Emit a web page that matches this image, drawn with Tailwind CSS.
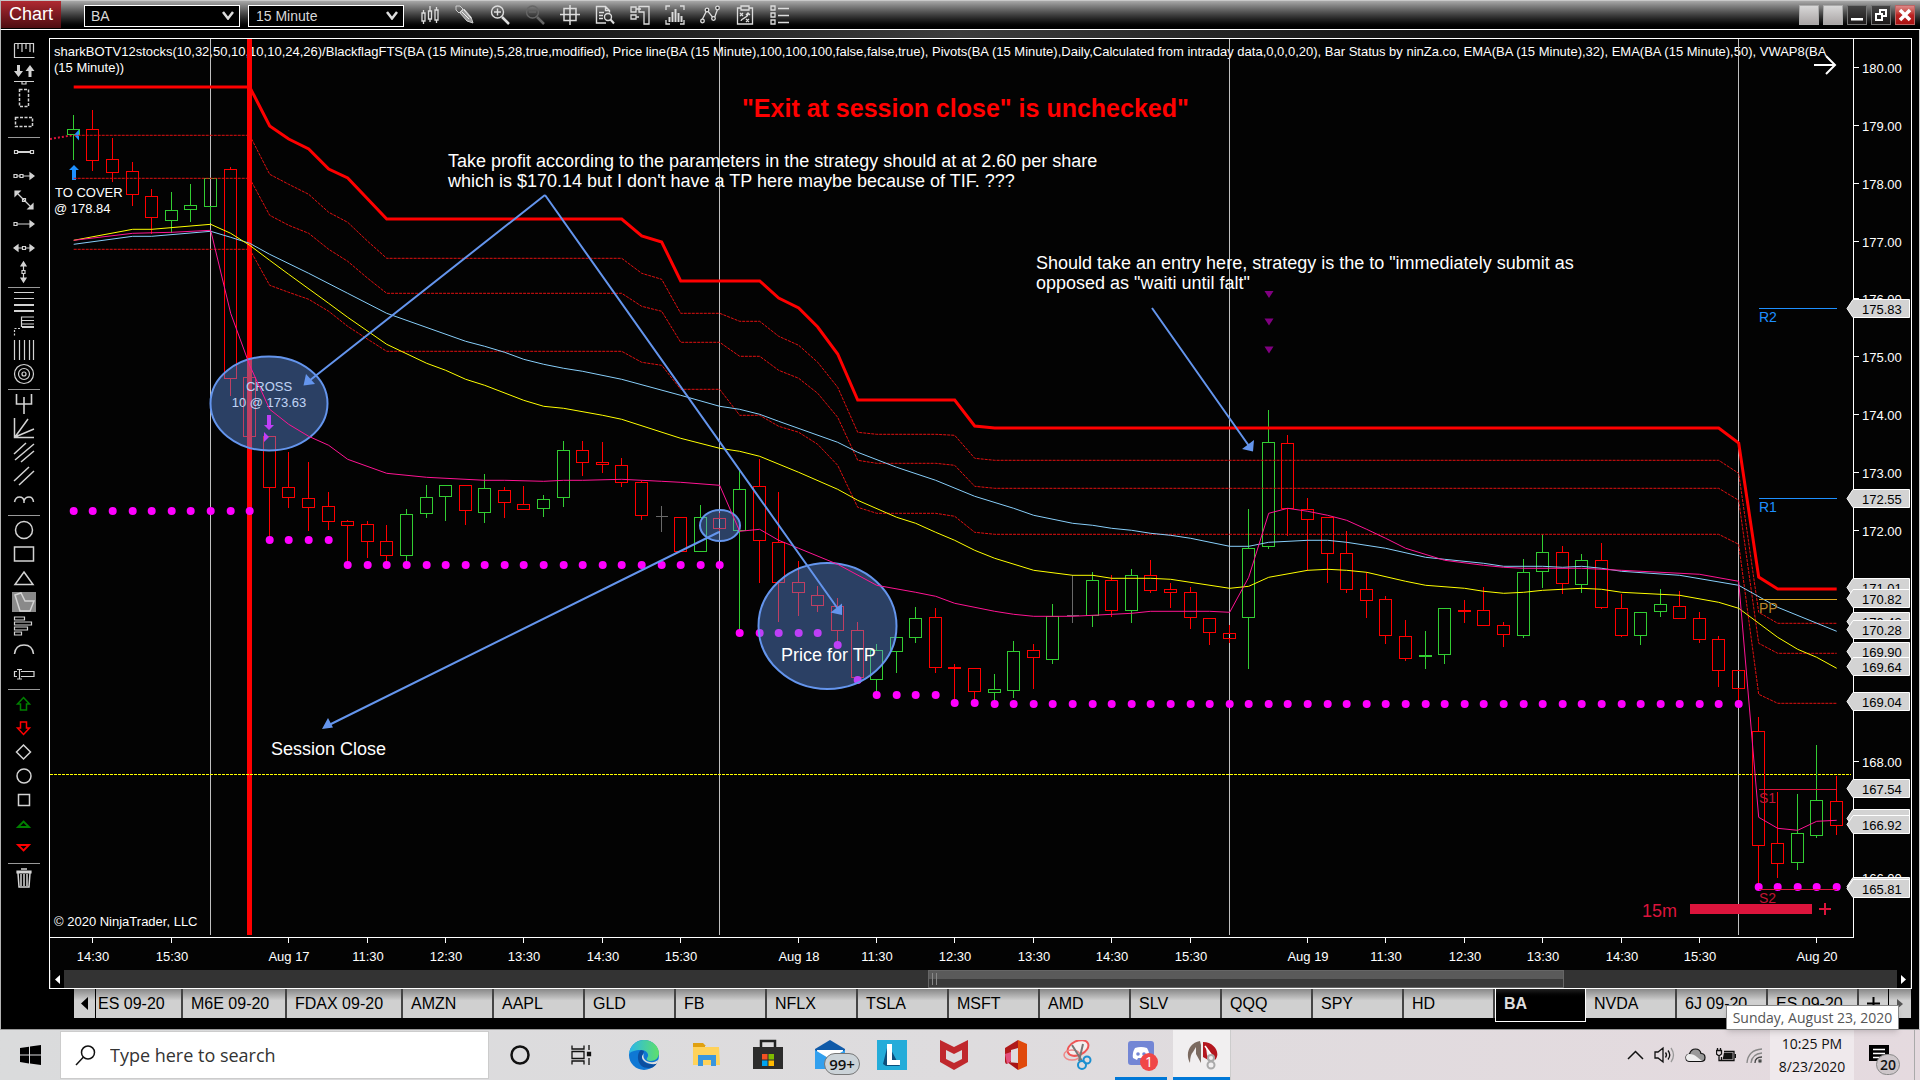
<!DOCTYPE html>
<html lang="en">
<head>
<meta charset="utf-8">
<title>Chart - BA 15 Minute</title>
<script src="https://cdn.jsdelivr.net/npm/@tailwindcss/browser@4"></script>
</head>
<body class="min-h-screen flex flex-col bg-black font-['Liberation_Sans',Arial,sans-serif] text-white overflow-hidden">

<!-- Title bar -->
<header class="h-[30px] shrink-0 flex items-center border-t border-l border-t-[#c8c8c8] border-l-[#b4b4b4] border-b border-b-white bg-gradient-to-b from-[#a8a8a8] to-black pr-[5px] pb-px">
  <h1 class="self-stretch w-[60px] flex items-center justify-center text-[18px] bg-gradient-to-b from-[#b02a32] to-[#4e0d11]">Chart</h1>
  <div class="relative ml-[23px] w-[156px] h-[22px]">
    <select aria-label="Instrument" class="appearance-none w-full h-full bg-black border border-white pl-[6px] text-[14px] leading-[18px] text-[#d8d8d8]"><option>BA</option></select>
    <svg class="absolute right-[6px] top-[7px] pointer-events-none" width="12" height="9" viewBox="0 0 12 9" fill="none" stroke="#ddd" stroke-width="2.5"><path d="M1 1L6 7.500L11 1"/></svg>
  </div>
  <div class="relative ml-2 w-[156px] h-[22px]">
    <select aria-label="Interval" class="appearance-none w-full h-full bg-black border border-white pl-[7px] text-[14px] leading-[18px] text-[#d8d8d8]"><option>15 Minute</option></select>
    <svg class="absolute right-[6px] top-[7px] pointer-events-none" width="12" height="9" viewBox="0 0 12 9" fill="none" stroke="#ddd" stroke-width="2.5"><path d="M1 1L6 7.500L11 1"/></svg>
  </div>
  <nav aria-label="Chart tools" class="flex items-center gap-[15px] ml-4">
    <button aria-label="Bar style"><svg width="20" height="20" viewBox="0 0 20 20" fill="none" stroke="#ddd" stroke-width="1.3"><path d="M3.500 5v3M3.500 16v3M10 1v5M10 14v3M16.500 2v3M16.500 15v3"/><path d="M2 8h3v8H2zM8.500 6h3v8h-3zM15 5h3v10h-3z"/></svg></button>
    <button aria-label="Drawing tools"><svg width="20" height="20" viewBox="0 0 20 20" fill="#ccc" stroke="#ccc"><path d="M1 1l4 0 3 3-4 4-3-3z" fill="none"/><path d="M5 8l4-4 7 8 2 6-6-2z" fill="#999"/><path d="M7 7l7 7M9 5l7 8" stroke="#eee"/></svg></button>
    <button aria-label="Zoom in"><svg width="20" height="20" viewBox="0 0 20 20" fill="none" stroke="#ddd" stroke-width="1.4"><circle cx="7.500" cy="7" r="6"/><path d="M4 7h7M7.500 3.500v7"/><path d="M12 12l7 7" stroke-width="2.500"/></svg></button>
    <button aria-label="Zoom out" disabled><svg width="20" height="20" viewBox="0 0 20 20" fill="none" stroke="#666" stroke-width="1.4"><circle cx="7.500" cy="7" r="6"/><path d="M4 7h7"/><path d="M12 12l7 7" stroke-width="2.500"/></svg></button>
    <button aria-label="Crosshair"><svg width="20" height="20" viewBox="0 0 20 20" fill="none" stroke="#ddd" stroke-width="1.500"><path d="M4 3.500h12v12H4zM10 0v20M0 9.500h20"/></svg></button>
    <button aria-label="Data box"><svg width="20" height="20" viewBox="0 0 20 20" fill="none" stroke="#ddd" stroke-width="1.400"><path d="M11 18H1.500V1.500h9l4 4v2M10.500 1.500v4h4M4 7.500h5M4 10.500h4M4 13.500h4"/><circle cx="13" cy="12" r="3.500"/><path d="M15.500 14.500l3.500 4" stroke-width="2"/></svg></button>
    <button aria-label="Chart trader"><svg width="20" height="20" viewBox="0 0 20 20" fill="none" stroke="#ddd" stroke-width="1.300"><path d="M1 2h5v5H1zM1 10h5v4H1zM6 4h5M6 12h3"/><path d="M9 1.500h10V19h-5V7H9z"/></svg></button>
    <button aria-label="Chart panel"><svg width="20" height="20" viewBox="0 0 20 20" fill="none" stroke="#ddd" stroke-width="1.300"><path d="M5 1H1v4M15 1h4v4M1 15v4h4M19 15v4h-4"/><path d="M4.500 17v-5M7.500 17V7M10.500 17V4M13.500 17V8M16.500 17v-6" stroke-width="2"/></svg></button>
    <button aria-label="Indicators"><svg width="20" height="20" viewBox="0 0 20 20" fill="none" stroke="#ddd" stroke-width="1.300"><path d="M2 15L7 5l7 9 4-11"/><g fill="#222"><circle cx="2.500" cy="16" r="1.800"/><circle cx="7" cy="5" r="1.800"/><circle cx="13.500" cy="13.500" r="1.800"/><circle cx="17.500" cy="3" r="1.800"/></g></svg></button>
    <button aria-label="Strategies"><svg width="20" height="20" viewBox="0 0 20 20" fill="none" stroke="#ddd" stroke-width="1.300"><path d="M6 3H2.500v16h15V3H14M6 1h8v4H6z"/><path d="M5 8l3 3M8 8l-3 3M11 14l3 3M14 14l-3 3M6 16c0-3 7-3 7-7M11 10l2-2 2 2"/></svg></button>
    <button aria-label="Properties"><svg width="20" height="20" viewBox="0 0 20 20" fill="none" stroke="#ddd" stroke-width="1.300"><path d="M1 1h4v4H1zM1 8h4v4H1zM1 15h4v4H1z"/><path d="M8 3.500h11M8 10.500h11M8 17.500h11" stroke-width="1.600"/></svg></button>
  </nav>
  <div class="ml-auto flex gap-1">
    <button aria-label="Tile" class="w-5 h-5 border border-[#aaa] bg-gradient-to-b from-[#d8d8d8] to-[#aaa5a5]"></button>
    <button aria-label="Link" class="w-5 h-5 border border-[#aaa] bg-gradient-to-b from-[#d8d8d8] to-[#aaa5a5]"></button>
    <button aria-label="Minimize" class="w-5 h-5 border border-[#777] bg-gradient-to-b from-[#444] to-[#1c1919]"><svg viewBox="0 0 18 18"><path d="M3 12h12v2.500H3z" fill="#fff"/></svg></button>
    <button aria-label="Restore" class="w-5 h-5 border border-[#777] bg-gradient-to-b from-[#444] to-[#1c1919]"><svg viewBox="0 0 18 18" fill="none" stroke="#fff" stroke-width="2"><path d="M4 8h6v6H4zM8 7V4h6v6h-3"/></svg></button>
    <button aria-label="Close" class="w-5 h-5 border border-[#b66] bg-gradient-to-b from-[#d88] via-[#b22] to-[#a11]"><svg viewBox="0 0 18 18" stroke="#fff" stroke-width="3.500"><path d="M4 4l10 10M14 4L4 14"/></svg></button>
  </div>
</header>

<main class="flex-1 flex flex-col border-x border-l-[#b4b4b4] border-r-[#d0d0d0] border-b border-b-[#999]">
  <div class="h-2 shrink-0 bg-gradient-to-r from-black via-[#3c3c3c] to-black"></div>
  <div class="flex flex-1">
    <nav id="tools" aria-label="Drawing tools" class="w-12 pr-[2px] shrink-0 flex flex-col items-center"></nav>

    <div class="flex-1 min-w-0 pr-[7px]">
      <section class="border border-white bg-[#030303]">
        <svg id="chart" class="block w-full h-auto font-['Liberation_Sans',Arial,sans-serif]" viewBox="50 39 1861 931" role="img" aria-label="BA 15 minute candlestick chart">
          <g id="header" fill="#fff" font-size="13">
            <text x="54" y="56">sharkBOTV12stocks(10,32,50,10,10,10,24,26)/BlackflagFTS(BA (15 Minute),5,28,true,modified), Price line(BA (15 Minute),100,100,100,false,false,true), Pivots(BA (15 Minute),Daily,Calculated from intraday data,0,0,0,20), Bar Status by ninZa.co, EMA(BA (15 Minute),32), EMA(BA (15 Minute),50), VWAP8(BA</text>
            <text x="54" y="72">(15 Minute))</text>
            <text x="54" y="926">© 2020 NinjaTrader, LLC</text>
          </g>
          <path d="M210.500 39V935M719.500 39V935M1229.500 39V935M1738.500 39V935" stroke="#c0c0c0"/>
          <path d="M249.500 39V935" stroke="#f00" stroke-width="5"/>
          <path d="M50 774.500H1851" stroke="#ff0" stroke-dasharray="3 1"/>
          <path d="M50 139L74 135" stroke="#dc143c" stroke-width="2" stroke-dasharray="2 2"/>
          <g id="candles" fill="none" shape-rendering="crispEdges"></g>
          <g id="marks">
            <path d="M79 129.500v11L74 135z" fill="#1e90ff"/>
            <path d="M74 165l5 5h-3v10h-4v-10h-3z" fill="#1e90ff"/>
            <path d="M269 430l-5-5h3v-10h4v10h3zM264 432v10l5-5z" fill="#f0f"/>
            <g font-size="13" fill="#fff"><text x="55" y="197">TO COVER</text><text x="54" y="213">@ 178.84</text>
            <g text-anchor="middle"><text x="269" y="391">CROSS</text><text x="269" y="407">10 @ 173.63</text></g></g>
          </g>
          <g id="dots" fill="#f0f"></g>
          <g fill="#6495ed" fill-opacity=".42" stroke="#6495ed" stroke-width="2">
            <ellipse cx="269" cy="403.500" rx="58.500" ry="47"/>
            <ellipse cx="720" cy="525.500" rx="20" ry="15.500"/>
            <ellipse cx="827.500" cy="626" rx="69" ry="63"/>
          </g>
          <g id="lines" fill="none"></g>
          <g stroke="#6495ed" stroke-width="2" fill="#6495ed">
            <path d="M545 195L309 381M545 195L838 609M719 532L329 725M1152 308L1249 446" fill="none"/>
            <path stroke="none" d="M306 374l9 10-11.500 1.500zM830.500 612.500l11.500-9v11.500zM1242 449l12-9-1 11.500zM328 718l5 9.500-11 1.500z"/>
          </g>
          <path d="M1264.500 291h9l-4.500 7zM1264.500 318.500h9l-4.500 7zM1264.500 346.500h9l-4.500 7z" fill="#800080"/>
          <g fill="#fff" font-size="18">
            <text x="448" y="167">Take profit according to the parameters in the strategy should at at 2.60 per share</text>
            <text x="448" y="187">which is $170.14 but I don't have a TP here maybe because of TIF. ???</text>
            <text x="1036" y="269">Should take an entry here, strategy is the to "immediately submit as</text>
            <text x="1036" y="289">opposed as "waiti until falt"</text>
            <text x="271" y="755">Session Close</text>
            <text x="781" y="661">Price for TP</text>
            <text x="742" y="117" fill="#f00" font-size="25" font-weight="bold">"Exit at session close" is unchecked"</text>
            <text x="1642" y="917" fill="#dc143c">15m</text>
          </g>
          <path d="M1690 904h122v10h-122zM1819 908h5v-5h2v5h5v2h-5v5h-2v-5h-5z" fill="#dc143c"/>
          <g font-size="14" fill="none">
            <path d="M1759 308.500h78M1759 498.500h78" stroke="#1e90ff"/><path d="M1759 599.500h78" stroke="#daa520"/><path d="M1759 789.500h78M1759 889.500h78" stroke="#dc143c"/>
            <text x="1759" y="322" fill="#1e90ff">R2</text><text x="1759" y="512" fill="#1e90ff">R1</text><text x="1759" y="613" fill="#b8862a">PP</text><text x="1759" y="803" fill="#c01535">S1</text><text x="1759" y="903" fill="#c01535">S2</text>
          </g>
          <path d="M1814 65h20M1826 56l9 9-9 9" stroke="#fff" stroke-width="2" fill="none"/>
          <path d="M1853.500 39V937.500M50 937.500H1854" stroke="#fff"/>
          <g id="axes" font-size="13" fill="#fff"></g>
        </svg>
        <div class="h-[18px] flex bg-[#333]">
          <button aria-label="Scroll left" class="w-[13px] shrink-0 ml-px bg-black flex items-center justify-center"><svg width="5" height="9"><path d="M5 0v9L0 4.500z" fill="#fff"/></svg></button>
          <div class="w-[46.4%]"></div>
          <div class="w-[34.2%] border border-[#666] bg-gradient-to-b from-[#5a5a5a] from-50% to-[#3a3a3a] to-50% flex items-center gap-[3px] pl-[3px]"><i class="w-px h-3 bg-[#888]"></i><i class="w-px h-3 bg-[#888]"></i></div>
          <button aria-label="Scroll right" class="w-[13px] shrink-0 ml-auto mr-px bg-black flex items-center justify-center"><svg width="5" height="9"><path d="M0 0v9l5-4.500z" fill="#fff"/></svg></button>
        </div>
      </section>
    </div>
  </div>

  <!-- Workspace tabs -->
  <div id="tabs" role="tablist" class="relative flex items-start h-10 pl-[73px] pr-[8px] text-[16px] text-black">
    <button aria-label="Previous tabs" class="w-[22px] h-[29px] shrink-0 flex items-center justify-center border-r border-black bg-gradient-to-b from-[#888] to-[#d0d0d0] to-40%"><svg width="7" height="13"><path d="M7 0v13L0 6.500z"/></svg></button>
  </div>
</main>

<!-- Taskbar -->
<footer class="relative h-[50px] shrink-0 flex items-center bg-gradient-to-r from-[#dadbdc] via-[#dedcde] to-[#e5dadf] text-[#111] font-['Open_Sans','Noto_Sans',sans-serif]">
  <button aria-label="Start" class="w-[60px] flex justify-center"><svg width="21" height="20" viewBox="0 0 21 20"><path d="M0 3l9-1.300V9.500H0zM10 1.500L21 0v9.500H10zM0 10.500h9v8L0 17zM10 10.500h11V20l-11-1.500z"/></svg></button>
  <label class="w-[429px] h-12 flex items-center gap-[14px] pl-[14px] bg-white border border-[#ccc]">
    <svg width="21" height="21" viewBox="0 0 21 21" fill="none" stroke="#111" stroke-width="1.500"><circle cx="13" cy="7.500" r="6.500"/><path d="M8.500 12L1 20"/></svg>
    <input aria-label="Search" placeholder="Type here to search" class="w-[340px] outline-none text-[18px] placeholder:text-[#333]">
  </label>
  <nav aria-label="Apps" class="flex self-stretch">
    <button aria-label="Cortana" class="w-[62px] flex items-center justify-center"><svg width="22" height="22" fill="none" stroke="#111" stroke-width="2.500"><circle cx="11" cy="11" r="8.500"/></svg></button>
    <button aria-label="Task view" class="w-[60px] flex items-center justify-center"><svg width="22" height="22" viewBox="0 0 22 22" fill="none" stroke="#111" stroke-width="1.300"><path d="M2 1.500v3.500h12V1.500M2 20.500V17h12v3.500M2 7.500h12v7H2zM19 1v5M19 14v7"/><path d="M17.500 8.500h3v3h-3z" fill="#111"/></svg></button>
    <button aria-label="Edge" class="w-[66px] flex items-center justify-center"><svg width="32" height="32" viewBox="0 0 32 32"><defs><linearGradient id="eg" x1="0" x2="1"><stop stop-color="#2bb6ea"/><stop offset="1" stop-color="#5fe06a"/></linearGradient></defs><circle cx="16" cy="16" r="15" fill="#0f78d4"/><path d="M1 15C2 6 9 1 16 1c9 0 15 7 15 13 0 5-4 8-8 8-3 0-5-1-4-3 3-3 0-8-6-8-6 0-11 2-12 4z" fill="url(#eg)"/><path d="M13 11c-5 3-5 19 9 18 3 0 6-3 7-5-7 3-15 0-15-6 0-3 2-4 2-6z" fill="#0b4fa0"/><path d="M17 13c-3 3-2 9 5 10 4 1 6-1 8-2 0 2-1 3-2 4-7 1-15-3-14-8z" fill="#dedede"/></svg></button>
    <button aria-label="File Explorer" class="w-[60px] flex items-center justify-center"><svg width="28" height="26" viewBox="0 0 28 26"><path d="M0 1h10l3 3h-1v4H0z" fill="#e0a010"/><path d="M0 5h26l1 18H0z" fill="#ffd25a"/><path d="M5 24V13h18v11h-5v-6h-8v6z" fill="#3a96dd"/></svg></button>
    <button aria-label="Store" class="w-[62px] flex items-center justify-center"><svg width="30" height="32" viewBox="0 0 30 32"><path d="M8 10V2h14v8" fill="none" stroke="#222" stroke-width="2.500"/><path d="M0 8h30v22H0z" fill="#2c2c2c"/><path d="M9 15h5.500v5.500H9z" fill="#f25022"/><path d="M15.500 15H21v5.500h-5.500z" fill="#7fba00"/><path d="M9 21.500h5.500V27H9z" fill="#00a4ef"/><path d="M15.500 21.500H21V27h-5.500z" fill="#ffb900"/></svg></button>
    <button aria-label="Mail, 99+ unread" class="relative w-[62px] flex items-center justify-center"><svg width="32" height="32" viewBox="0 0 32 32"><path d="M1 10L16 1l15 9v20H1z" fill="#0f5aa8"/><path d="M3 11h26v10H3z" fill="#fff"/><path d="M1 11l15 9 15-9v19H1z" fill="#32a0ee"/></svg><span class="absolute left-[25px] top-[23px] w-9 h-[22px] rounded-full border border-[#777] bg-[#cbd3d8] text-[15px] font-semibold leading-5 text-center">99+</span></button>
    <button aria-label="L app" class="w-[62px] flex items-center justify-center"><svg width="30" height="30" viewBox="0 0 30 30"><path d="M0 0h30v30H0z" fill="#24acd9"/><path d="M11 4l-5 20 3 2h14l-2-3z" fill="#0d4f7d"/><path d="M10 4h5v16h8v5H10z" fill="#fff"/></svg></button>
    <button aria-label="McAfee" class="w-[62px] flex items-center justify-center"><svg width="28" height="30" viewBox="0 0 28 30"><path d="M0 0l14 7 14-7v22l-14 8-14-8zM6 10v9l8 4 8-4v-9l-8 4z" fill="#c0282d" fill-rule="evenodd"/></svg></button>
    <button aria-label="Office" class="w-[62px] flex items-center justify-center"><svg width="24" height="30" viewBox="0 0 24 30"><path d="M14 0l9 4v22l-9 4z" fill="#e04a0c"/><path d="M14 0v8L7 10v12l-5 2-1-2V8z" fill="#b01a1a"/><path d="M3 22l11 1v7z" fill="#a81414"/><path d="M1 14l6-2v9l-4 3z" fill="#e3507e"/></svg></button>
    <button aria-label="Snipping Tool" class="w-[62px] flex items-center justify-center"><svg width="30" height="30" viewBox="0 0 30 30" fill="none"><ellipse cx="15" cy="8" rx="11" ry="7" stroke="#e55" stroke-width="2" transform="rotate(-25 15 8)" fill="#f4eeee"/><ellipse cx="9" cy="15" rx="8" ry="5" stroke="#e88" stroke-width="1.500"/><path d="M9 5l10 16M20 4l-4 17" stroke="#777" stroke-width="2"/><circle cx="24" cy="20" r="3.500" stroke="#1b8fd0" stroke-width="2"/><circle cx="19" cy="25" r="4" stroke="#1b8fd0" stroke-width="2"/></svg></button>
    <button aria-label="Discord, 1 notification" class="relative w-[64px] flex items-center justify-center"><svg width="26" height="28" viewBox="0 0 26 28"><path d="M3 0h20q3 0 3 3v25l-5-4H3q-3 0-3-3V3q0-3 3-3z" fill="#7386d5"/><path d="M7 7q6-2 12 0 3 5 2 10l-4 2-1-2h-6l-1 2-4-2Q4 12 7 7z" fill="#fff"/><circle cx="10" cy="13" r="1.800" fill="#7386d5"/><circle cx="16" cy="13" r="1.800" fill="#7386d5"/></svg><span class="absolute left-[31px] top-[23px] size-[18px] rounded-full bg-[#f04747] text-white text-[14px] leading-[18px] text-center">1</span><i class="absolute bottom-0 left-[6px] w-[52px] h-[3px] bg-[#0078d7]"></i></button>
    <button aria-label="NinjaTrader" class="relative w-[58px] flex items-center justify-center bg-[#f1eff0] border-r border-[#ccc]"><svg width="32" height="30" viewBox="0 0 32 30"><path d="M14 1C3 3-1 14 4 23q0-8 3-11l3-5v7l5 9V5z" fill="#7b6a60"/><path d="M17 2c12 0 18 12 12 18l-4-6-5-7 1 8 3 6-7-4z" fill="#b4161e"/><path d="M19 6l8 11" stroke="#fff" stroke-width="1.500"/><g fill="none" stroke="#aaa" stroke-width="2"><circle cx="25" cy="18" r="3"/><circle cx="25" cy="25" r="3.500"/></g></svg><i class="absolute bottom-0 inset-x-0 h-[3px] bg-[#0078d7]"></i></button>
  </nav>
  <div class="ml-auto flex items-center self-stretch">
    <div class="flex items-center gap-[10px] pr-[7px]">
      <button aria-label="Show hidden icons"><svg width="17" height="10" fill="none" stroke="#111" stroke-width="1.500"><path d="M1 9l7.500-7.500L16 9"/></svg></button>
      <button aria-label="Volume"><svg width="21" height="18" viewBox="0 0 21 18" fill="none" stroke="#111" stroke-width="1.300"><path d="M1 6h3l5-4v14l-5-4H1zM11.500 6.500q2 2.500 0 5M14 4.500q3.500 4.500 0 9"/><path d="M17 2q5 7 0 14" stroke="#999"/></svg></button>
      <button aria-label="OneDrive"><svg width="21" height="15" viewBox="0 0 21 15" fill="#999" stroke="#111" stroke-width="1.200"><path d="M5 13.500q-4 0-4-4 0-3 3.500-3.500Q6 1 10.500 1T16 5.500q4 0 4 4t-4 4z"/><path d="M4 6q5 0 8 3l5 4H5q-4 0-4-3.500T4 6z" fill="#eee" stroke="none"/></svg></button>
      <button aria-label="Battery"><svg width="20" height="15" viewBox="0 0 20 15" fill="none" stroke="#111" stroke-width="1.300"><path d="M8 3.500h10v9H5.500V9M19.500 6v4M1.500 0v2.500M4.500 0v2.500M.500 2.500h5V6L3 8 .500 6zM3 8v4.500h3"/><path d="M8.500 5.500H16v5H7.500z" fill="#111"/></svg></button>
      <button aria-label="Wi-Fi"><svg width="17" height="17" viewBox="0 0 17 17" fill="none" stroke="#888" stroke-width="1.300"><path d="M1 16Q2 3 16 2M5 16Q6 7 16 6" /><path d="M9 16q0-6 7-6" stroke="#444"/><circle cx="14" cy="14" r="1.500" fill="#111"/></svg></button>
    </div>
    <time class="w-[84px] self-stretch bg-[#efe9ec] flex flex-col items-center text-[14px] leading-[23px] pt-[2px]"><span>10:25 PM</span><span>8/23/2020</span></time>
    <button aria-label="20 notifications" class="relative w-[60px] self-stretch"><svg class="absolute left-[15px] top-[15px]" width="20" height="20" viewBox="0 0 20 20"><path d="M0 0h20v16h-4v4l-4-4H0z"/><path d="M4 4.500h12M4 8.500h12M4 12.500h8" stroke="#fff" stroke-width="1.500"/></svg><span class="absolute left-[22px] top-[24px] w-6 h-[21px] rounded-full border border-[#888] bg-[#cdc6c9] text-[14px] font-semibold leading-[19px]">20</span></button>
    <i class="w-[6px] self-stretch border-l border-[#aaa]"></i>
  </div>
  <div role="tooltip" class="absolute right-[21px] -top-[25px] h-[25px] w-[173px] flex items-center justify-center bg-white border border-[#888] shadow-md text-[14px] text-[#555]">Sunday, August 23, 2020</div>
</footer>

<script>
const $ = id => document.getElementById(id);
const barX = i => Math.floor(73.4 + 19.59 * i);
const R = '#f00', G = '#32cd32', D = '#696969';

// [colour, high, body top, body bottom, low] in chart units
const candles = [
[G,115,129,134,160],[R,110,129,160,171],[R,138,159,172,182],[R,162,171,194,206],[R,189,196,217,234],[G,192,210,220,233],[G,184,205,209,222],[G,178,178,206,223],[R,167,169,378,396],[R,377,377,436,436],
[R,436,436,487,537],[R,452,487,497,508],[R,462,498,507,531],[R,492,506,521,530],[R,520,521,525,562],[R,521,524,541,558],[R,525,541,555,562],[G,509,514,555,562],[G,485,497,513,518],[G,485,485,496,521],
[R,485,485,510,525],[G,474,488,512,523],[R,487,490,502,518],[R,486,504,509,509],[G,495,499,508,517],[G,441,450,497,507],[R,441,450,462,476],[R,442,462,464,473],[R,458,465,482,487],[R,481,482,515,520],
[D,506,516,516,532],[R,517,517,551,551],[G,505,517,551,551],[R,513,518,528,531],[G,471,489,530,630],[R,459,486,540,583],[R,492,542,582,622],[R,561,582,592,616],[R,586,595,605,612],[R,598,606,630,643],
[R,622,630,677,677],[G,644,650,679,695],[G,637,637,651,673],[G,607,618,637,643],[R,608,617,667,673],[R,664,667,668,700],[R,668,668,691,702],[G,674,689,692,702],[G,641,651,690,698],[R,644,650,657,689],
[G,604,616,659,664],[D,575,615,615,623],[G,572,580,615,627],[R,575,580,610,617],[G,569,575,610,623],[R,560,575,590,593],[R,583,589,592,608],[R,587,592,617,629],[R,618,618,632,645],[R,625,633,638,643],
[G,509,548,617,669],[G,410,442,546,549],[R,435,443,508,536],[R,498,509,519,571],[R,517,517,553,583],[R,531,553,589,593],[R,572,589,600,618],[R,596,599,635,644],[R,620,636,658,661],[G,631,655,656,669],
[G,608,608,654,664],[R,600,610,611,623],[R,587,610,625,625],[R,622,625,634,647],[G,559,572,635,638],[G,534,552,571,588],[R,546,552,583,594],[G,554,560,584,593],[R,543,560,607,609],[R,594,608,635,637],
[G,612,612,635,645],[G,589,604,611,617],[R,591,606,618,618],[R,612,618,639,643],[R,636,639,670,687],[R,670,670,688,702],[R,717,731,845,885],[R,792,843,863,878],[G,794,833,862,870],[G,745,800,835,838],[R,776,801,825,835]];
$('candles').innerHTML = candles.map(([c,h,t,b,l],i) => {
  const x = barX(i) + .5;
  return `<path stroke="${c}" d="M${x} ${h}V${t}M${x} ${b}V${l}M${x-6} ${t+.5}H${x+6}V${b+.5}H${x-6}Z"/>`;
}).join('');

// [last index, y] runs of stop dots
let i = 0, dots = '';
for (const [end, y] of [[9,511],[13,540],[33,565],[38,633],[39,645],[40,680],[44,695],[46,703],[85,704],[90,887]])
  for (; i <= end; i++) dots += `<circle cx="${barX(i)+.7}" cy="${y}" r="4"/>`;
$('dots').innerHTML = dots;

// [colour, width, extra attributes, flat list of bar index and y]
const series = [
 ['#e01010','1','stroke-dasharray="3 1"',[0,135,9,135,10,174,11,184,12,194,13,212,14,222,15,241,16,258,28,258,29,273,30,279,31,313,33,313,34,321,35,321,36,336,37,345,38,362,39,387,40,432,41,434,44,434,45,435,46,458,47,460,84,460,85,473,86,612,87,623,90,623]],
 ['#e01010','1','stroke-dasharray="3 1"',[0,178,9,178,10,215,11,225,12,233,13,249,14,261,15,278,16,293,28,293,29,306,30,311,31,342,33,342,34,356,35,356,36,370,37,378,38,393,39,417,40,460,41,463,44,463,45,465,46,486,47,488,84,488,85,500,86,643,87,653,90,653]],
 ['#e01010','1','stroke-dasharray="3 1"',[0,249,9,249,10,285,11,292,12,299,13,311,14,326,15,339,16,351,28,351,29,362,30,365,31,389,33,389,34,415,35,415,36,426,37,432,38,444,39,465,40,507,41,513,44,513,45,516,46,532,47,534,84,534,85,544,86,694,87,703,90,703]],
 ['#87cefa','1','',[0,244,3,236,4,236,7,231,8,237,9,243,10,254,12,273,14,293,16,313,20,341,21,346,22,352,23,359,24,364,25,368,26,371,28,379,31,395,33,406,34,409,35,414,36,421,39,442,40,452,42,467,44,480,46,496,48,508,49,515,51,523,52,525,53,528,54,530,55,533,56,535,57,538,59,546,60,546,61,542,63,540,64,540,65,542,67,548,69,557,70,559,72,563,73,566,75,566,76,567,77,566,78,568,79,571,82,575,85,585,87,607,90,631]],
 ['#ff0','1','',[0,240,3,229,4,229,7,224,8,233,9,245,10,260,11,274,13,303,14,317,16,344,18,363,19,370,20,379,21,385,23,400,24,406,25,408,27,415,28,419,31,438,33,448,34,451,35,456,37,472,39,489,40,500,42,517,43,523,44,532,45,540,46,550,47,558,49,570,51,575,52,575,53,578,55,578,56,579,59,588,60,586,61,577,63,570,64,569,65,570,66,572,68,581,69,585,71,588,72,591,73,593,74,592,75,590,77,588,78,589,79,592,82,595,84,602,85,608,87,637,88,649,89,657,90,668]],
 ['#ff1493','1','',[0,240,3,233,5,232,7,230,8,313,9,365,10,409,11,424,12,436,13,445,14,459,16,473,18,477,21,480,22,480,24,481,25,480,26,480,28,479,30,481,31,482,33,485,34,531,35,529,36,540,37,548,39,564,41,585,43,592,44,596,45,603,47,611,48,614,49,616,51,616,54,613,55,611,58,611,59,612,60,577,61,513,62,508,63,511,64,515,65,520,66,529,67,538,68,548,70,560,72,565,73,567,74,568,77,568,79,570,83,574,85,581,86,817,87,828,88,830,89,821,90,820]],
 ['#f00','3','',[0,87,9,87,10,126,11,139,12,149,13,169,14,178,15,199,16,219,28,219,29,236,30,242,31,281,35,281,36,298,37,308,38,327,39,354,40,400,45,400,46,426,47,428,84,428,85,443,86,577,87,589,90,589]]];
$('lines').innerHTML = series.map(([c,w,extra,p]) => {
  let pts = '';
  for (let k = 0; k < p.length; k += 2) pts += `${barX(p[k])+.7},${p[k+1]+(w==='1'?.3:0)} `;
  return `<polyline points="${pts}" stroke="${c}" stroke-width="${w}" ${extra}/>`;
}).join('');

const priceY = p => 67.5 + (180 - p) * 57.85;
let axes = '';
for (let p = 180; p >= 166; p--) {
  const y = Math.floor(priceY(p)) + .5;
  axes += `<path d="M1854 ${y}h5" stroke="#fff"/><text x="1862" y="${y+5}">${p}.00</text>`;
}
for (const p of [175.83,172.55,171.01,170.82,170.43,170.28,169.90,169.64,169.04,167.54,167.02,166.92,165.85,165.81]) {
  const y = Math.floor(priceY(p)) + .5;
  axes += `<path d="M1847 ${y}l6-9h56.500v18H1853z" fill="#d3d3d3" stroke="#fff"/><text x="1862" y="${y+5}" fill="#000">${p.toFixed(2)}</text>`;
}
const times = {1:'14:30',5:'15:30',11:'Aug 17',15:'11:30',19:'12:30',23:'13:30',27:'14:30',31:'15:30',37:'Aug 18',41:'11:30',45:'12:30',49:'13:30',53:'14:30',57:'15:30',63:'Aug 19',67:'11:30',71:'12:30',75:'13:30',79:'14:30',83:'15:30',89:'Aug 20'};
for (const k in times) axes += `<path d="M${barX(+k)+.5} 938v5" stroke="#fff"/><text x="${barX(+k)+1}" y="961" text-anchor="middle">${times[k]}</text>`;
$('axes').innerHTML = axes;

// Side tools: name and drawing on a 24x24 canvas; null marks a divider
const S = '#d3d3d3';
const tools = [
 ['Ruler','<path d="M2.500 5.500V19.500H22.500M2.500 5.500h19v9M6 6v5M10 6v8M14 6v5M18 6v8"/>'],
 ['Reorder','<path d="M5 3h3v6h3l-4.500 6L2 9h3zM16.500 15h3V9h3L18 3l-4.500 6h3z" fill="#d3d3d3" stroke="none"/><path d="M2 19.500h20M10 20v2h4v-2"/>'],
 ['Vertical region','<path d="M7.500 3.500h9v17h-9z" stroke-width="1.500" stroke-dasharray="3 1.500"/>'],
 ['Horizontal region','<path d="M3.500 7.500h17v9h-17z" stroke-width="1.500" stroke-dasharray="3 1.500"/>'],
 null,
 ['Line','<path d="M2.500 10.500h3v3h-3zM18.500 10.500h3v3h-3z"/><path d="M5 12h14" stroke-width="2"/>'],
 ['Ray','<path d="M2 10.500h3v3H2zM8 10.500h3v3H8zM5 12h3M11 12h8"/><path d="M18 9v6l4-3z" fill="#d3d3d3"/>'],
 ['Extended line','<path d="M4 4l16 16M10.500 10.500h3v3h-3z"/><path d="M3 3h5L3 8zM21 21h-5l5-5z" fill="#d3d3d3"/>'],
 ['Arrow line','<path d="M2 10.500h3v3H2zM5 12h14"/><path d="M18 9v6l4-3z" fill="#d3d3d3"/>'],
 ['Horizontal line','<path d="M4 12h6M14 12h6M10.500 10.500h3v3h-3z"/><path d="M6 9v6l-4-3zM18 9v6l4-3z" fill="#d3d3d3"/>'],
 ['Vertical line','<path d="M11.500 4v6M11.500 14v6M10 10.500h3v3h-3z"/><path d="M9 6h5l-2.500-4zM9 18h5l-2.500 4z" fill="#d3d3d3"/>'],
 null,
 ['Fibonacci retracements','<path d="M2 2.500h20M2 8.500h20"/><path d="M2 15h20M2 21h20" stroke-width="2"/>'],
 ['Fibonacci extensions','<path d="M22 3H9.500v10M10 6.500h12M10 10h12"/><path d="M10 13h12" stroke-width="2"/><path d="M8 14.500H2.500V22" stroke-dasharray="2 1.500"/>'],
 ['Fibonacci time','<path d="M2.500 2v20M7.500 2v20M12.500 2v20M17.500 2v20M21.500 2v20"/>'],
 ['Fibonacci circle','<circle cx="12" cy="12" r="9.500"/><circle cx="12" cy="12" r="5.500"/><circle cx="12" cy="12" r="2"/>'],
 null,
 ['Andrews pitchfork','<path d="M4.500 2v10h15V2M12 5v17" stroke-width="1.600"/>'],
 ['Gann fan','<path d="M2.500 2v19.500H22M3 21L16 3M3 21l19-8" stroke-width="1.500"/>'],
 ['Regression channel','<path d="M2 14L14 3M3 20L22 4M9 22L22 11" stroke-width="1.500"/>'],
 ['Trend channel','<path d="M2 17L17 3M7 21L22 7" stroke-width="1.500"/>'],
 ['Path','<path d="M2.500 14q1-5 5-5t4.500 4q1-4 5-4t4.500 5M12 13v2" stroke-width="1.500"/>'],
 null,
 ['Ellipse','<circle cx="12" cy="12" r="8.500" stroke-width="1.500"/>'],
 ['Rectangle','<path d="M2.500 5h19v14h-19z" stroke-width="1.500"/>'],
 ['Triangle','<path d="M12 6l9 12.500H3z" stroke-width="1.500"/>'],
 ['Polygon','<path d="M0 2h24v20H0z" fill="#8a8a8a" stroke="none"/><path d="M3 5l6-2 4 8 9 0-4 10H8z" stroke-width="1.500"/>'],
 ['Volume profile','<path d="M2.500 3h10v3h-10zM2.500 8h17v3h-17zM2.500 13h13v3h-13zM2.500 18h7v3h-7z"/>'],
 ['Arc','<path d="M2.500 16q1-9 9.500-9t9.500 9" stroke-width="1.500"/>'],
 ['Text','<path d="M9 9.500h13v5H9M5 9.500H2.500v5H5M5 7.500h5M5 17h5M7.500 7.500V17"/>'],
 null,
 ['Arrow up','<path stroke="#008000" stroke-width="1.500" d="M11.500 5.500l6 6.500h-3v6h-6v-6h-3z"/>'],
 ['Arrow down','<path stroke="#f00" stroke-width="1.500" d="M11.500 18.500l6-6.500h-3V6h-6v6h-3z"/>'],
 ['Diamond','<path d="M11.500 5l7 7-7 7-7-7z" stroke-width="1.500"/>'],
 ['Dot','<circle cx="12" cy="12" r="7" stroke-width="1.500"/>'],
 ['Square','<path d="M6.500 6.500h11v11h-11z" stroke-width="1.500"/>'],
 ['Triangle up','<path stroke="#008000" stroke-width="1.800" d="M11.500 9.500l5.500 5.500H6z"/>'],
 ['Triangle down','<path stroke="#f00" stroke-width="1.800" d="M11.500 14.500L17 9H6z"/>'],
 null,
 ['Remove drawings','<path d="M6 7l1 14h10l1-14M9 8v12M12 8v12M15 8v12M9 3h6" stroke-width="1.500"/><path d="M5 5h14v2H5z" fill="#d3d3d3"/>'],
];
$('tools').innerHTML = tools.map(t => t
  ? `<button aria-label="${t[0]}" class="size-6 shrink-0"><svg width="24" height="24" viewBox="0 0 24 24" fill="none" stroke="${S}" stroke-width="1.200">${t[1]}</svg></button>`
  : '<div class="h-[6px] w-8 shrink-0 flex items-center"><hr class="w-full border-[#999]"></div>').join('');

const tabs = [['ES 09-20',1],['M6E 09-20',2],['FDAX 09-20',3],...['AMZN','AAPL','GLD','FB','NFLX','TSLA','MSFT','AMD','SLV','QQQ','SPY','HD','BA','NVDA','6J 09-20','ES 09-20'].map(t => [t,0])];
$('tabs').insertAdjacentHTML('beforeend', tabs.map(([t,w]) => {
  const width = w === 1 ? 'w-[87px] pl-[2px]' : w === 2 ? 'w-[104px] pl-2' : w === 3 ? 'w-[116px] pl-2' : 'w-[91px] pl-2';
  return t === 'BA'
    ? `<button role="tab" aria-selected="true" class="${width} h-[33px] pb-[3px] shrink-0 text-left font-bold text-[#ddd] bg-gradient-to-b from-[#222] to-black to-30% border border-t-0 border-white">${t}</button>`
    : `<button role="tab" class="${width} h-[29px] shrink-0 text-left whitespace-nowrap border-r-2 border-r-[#444] bg-gradient-to-b from-[#888] to-[#d0d0d0] to-40%">${t}</button>`;
}).join('') + `<button aria-label="Add tab" class="w-[30px] h-[29px] shrink-0 flex items-center justify-center border-r border-black bg-gradient-to-b from-[#888] to-[#d0d0d0] to-40%"><svg width="13" height="13"><path d="M5.500 0h2v5.500H13v2H7.500V13h-2V7.500H0v-2h5.500z"/></svg></button><button aria-label="Next tabs" class="flex-1 h-[29px] flex items-center justify-center bg-gradient-to-b from-[#888] to-[#d0d0d0] to-40%"><svg width="6" height="10"><path d="M0 0v10l6-5z" fill="#555"/></svg></button>`);
</script>
</body>
</html>
